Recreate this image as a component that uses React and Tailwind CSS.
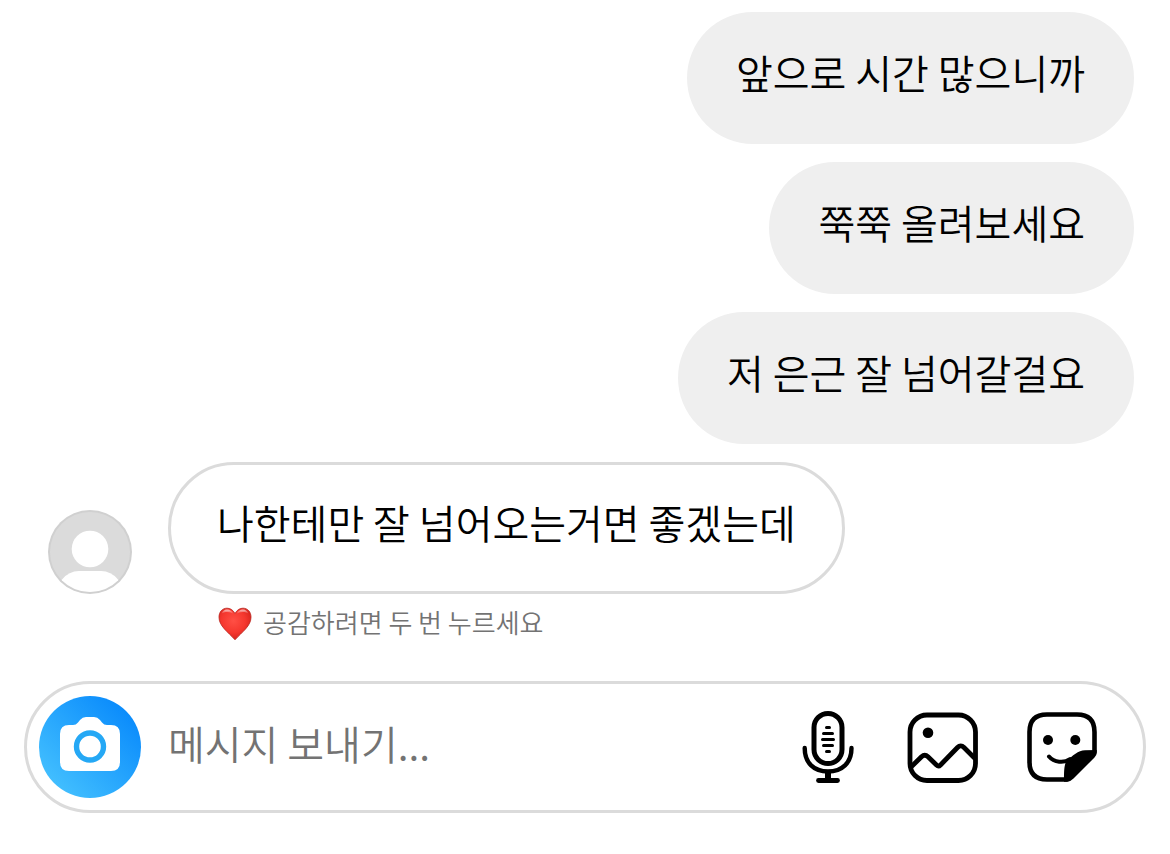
import React, { useState } from 'react';

const sentMessages = [
  '앞으로 시간 많으니까',
  '쭉쭉 올려보세요',
  '저 은근 잘 넘어갈걸요'
];

const Avatar = () => (
  <svg viewBox="0 0 84 84" className="h-21 w-21 shrink-0" aria-hidden="true">
    <defs>
      <clipPath id="avatar-clip">
        <circle cx="42" cy="42" r="40" />
      </clipPath>
    </defs>
    <circle cx="42" cy="42" r="42" fill="#d0d0d0" />
    <circle cx="42" cy="42" r="40" fill="#dbdbdb" />
    <circle cx="42" cy="39" r="18.3" fill="#fff" />
    <path
      d="M8 84 L14 69.500 Q21 61 31 61 H53 Q63 61 70 69.500 L76 84 Z"
      fill="#fff"
      clipPath="url(#avatar-clip)"
    />
  </svg>
);

const HeartIcon = () => (
  <svg viewBox="0 0 34 34" className="h-[34px] w-[34px] shrink-0" aria-hidden="true">
    <defs>
      <radialGradient id="heart-fill" cx="0.45" cy="0.4" r="0.62">
        <stop offset="0" stopColor="#ff4f45" />
        <stop offset="0.6" stopColor="#f5372e" />
        <stop offset="1" stopColor="#d4221b" />
      </radialGradient>
      <linearGradient id="heart-shine" x1="0" y1="0" x2="0" y2="1">
        <stop offset="0" stopColor="#fff" stopOpacity="0.7" />
        <stop offset="1" stopColor="#fff" stopOpacity="0" />
      </linearGradient>
    </defs>
    <path
      d="M17 6.500 C15 3 12.500 1.200 9 1.200 C4.200 1.200 1 5 1 10.200 C1 19 9.500 24.500 17 32.800 C24.500 24.500 33 19 33 10.200 C33 5 29.800 1.200 25 1.200 C21.500 1.200 19 3 17 6.500 Z"
      fill="url(#heart-fill)"
      stroke="#b8221c"
      strokeWidth="0.8"
    />
    <path d="M3.500 7 C4.500 4 6.500 2.500 9 2.500 C12 2.500 14 4 15.500 7 C12.500 4.800 7 4 3.500 7 Z" fill="url(#heart-shine)" />
    <path d="M18.500 7 C20 4 22 2.500 25 2.500 C27.500 2.500 29.500 4 30.500 7 C27 4 21.500 4.800 18.500 7 Z" fill="url(#heart-shine)" />
  </svg>
);

const CameraIcon = () => (
  <svg viewBox="0 0 102 102" className="h-full w-full" aria-hidden="true">
    <path
      d="M30 29 H34 Q37 29 39 26.500 L41 24 Q43.500 21 47 21 H55 Q58.500 21 61 24 L63 26.500 Q65 29 68 29 H72 Q81 29 81 38 V66 Q81 75 72 75 H30 Q21 75 21 66 V38 Q21 29 30 29 Z"
      fill="#fff"
    />
    <circle cx="51" cy="50.500" r="13.500" fill="none" stroke="#25a8f5" strokeWidth="5.400" />
  </svg>
);

const MicIcon = () => (
  <svg
    viewBox="0 0 60 72"
    className="h-18 w-15"
    fill="none"
    stroke="#000"
    strokeLinecap="round"
    aria-hidden="true"
  >
    <rect x="16" y="2.500" width="28" height="50" rx="14" strokeWidth="5" />
    <path d="M6.700 37 C6.700 52 16 60.500 30 60.500 C44 60.500 53.500 52 53.500 37" strokeWidth="4.400" />
    <path d="M30 61 V69" strokeWidth="6" strokeLinecap="butt" />
    <path d="M20.500 69.500 H39.500" strokeWidth="4.800" />
    <path d="M28.500 16.500 H31.500 M25.500 22.500 H34.500 M24.500 28.500 H35.500 M25.500 34.500 H34.500 M28.500 40.500 H31.500" strokeWidth="3" />
  </svg>
);

const ImageIcon = () => (
  <svg
    viewBox="0 0 72 72"
    className="h-18 w-18"
    fill="none"
    stroke="#000"
    strokeWidth="4.800"
    strokeLinejoin="round"
    aria-hidden="true"
  >
    <rect x="4" y="4" width="65.500" height="65.500" rx="17" />
    <circle cx="22" cy="21.700" r="5.300" fill="#000" stroke="none" />
    <path d="M4 57 L15.500 45.800 Q18.800 42.800 22 45.800 L30.500 54 Q32.500 56 34.500 54 L51.500 36.500 Q54.700 33.200 58 36.500 L69 47.500" />
  </svg>
);

const StickerIcon = () => (
  <svg
    viewBox="0 0 72 72"
    className="h-18 w-18"
    fill="none"
    stroke="#000"
    strokeWidth="4.600"
    strokeLinecap="round"
    strokeLinejoin="round"
    aria-hidden="true"
  >
    <path d="M41 68.500 H21 Q3.500 68.500 3.500 51 V21 Q3.500 3.500 21 3.500 H51 Q68.500 3.500 68.500 21 V41" />
    <path
      d="M70.700 39 V42 Q70.700 44.500 68.500 46.500 L47.500 67.500 Q44.500 70.700 41 70.700 H38 C38 61 38 55 40 51 C47 44 52 39.500 59 39.200 Z"
      fill="#000"
      stroke="none"
    />
    <circle cx="22" cy="29" r="5" fill="#000" stroke="none" />
    <circle cx="49.300" cy="29" r="5" fill="#000" stroke="none" />
    <path d="M23 45.500 C28 51.500 38 52.500 44 48" strokeWidth="4" />
  </svg>
);

const App = () => {
  const [message, setMessage] = useState('');

  return (
    <div className="bg-white font-['Noto_Sans_CJK_KR',sans-serif] font-[350] text-black">
      <main className="flex flex-col gap-[18px] pt-3 pr-9 pl-12">
        {sentMessages.map((text) => (
          <div
            key={text}
            className="self-end rounded-full bg-[#efefef] px-[49px] pt-[30px] pb-[42px] text-[40px] leading-[60px]"
          >
            {text}
          </div>
        ))}

        <div>
          <div className="flex items-end gap-9">
            <Avatar />
            <div className="rounded-full border-3 border-[#dbdbdb] px-[46px] pt-[27px] pb-[39px] text-[40px] leading-[60px]">
              나한테만 잘 넘어오는거면 좋겠는데
            </div>
          </div>
          <div className="mt-[10px] ml-[170px] flex items-center gap-[11px] text-[26px] leading-9 text-[#737373]">
            <HeartIcon />
            <span className="pb-1">공감하려면 두 번 누르세요</span>
          </div>
        </div>
      </main>

      <footer className="px-6 pt-[37px] pb-10">
        <div className="flex h-33 items-center rounded-full border-3 border-[#dbdbdb] pr-[45px] pl-3">
          <button
            type="button"
            aria-label="카메라"
            className="h-[102px] w-[102px] shrink-0 rounded-full bg-linear-to-tr/srgb from-[#4cc8ff] to-[#0082fb]"
          >
            <CameraIcon />
          </button>
          <input
            type="text"
            aria-label="메시지 보내기"
            placeholder="메시지 보내기..."
            value={message}
            onChange={(e) => setMessage(e.target.value)}
            className="mr-6 ml-[27px] h-16 min-w-0 flex-1 bg-transparent pb-2 text-[40px] outline-none placeholder:text-[#737373]"
          />
          <div className="flex shrink-0 items-center gap-12">
            <button type="button" aria-label="음성 메시지">
              <MicIcon />
            </button>
            <button type="button" aria-label="사진">
              <ImageIcon />
            </button>
            <button type="button" aria-label="스티커">
              <StickerIcon />
            </button>
          </div>
        </div>
      </footer>
    </div>
  );
};

export default App;
